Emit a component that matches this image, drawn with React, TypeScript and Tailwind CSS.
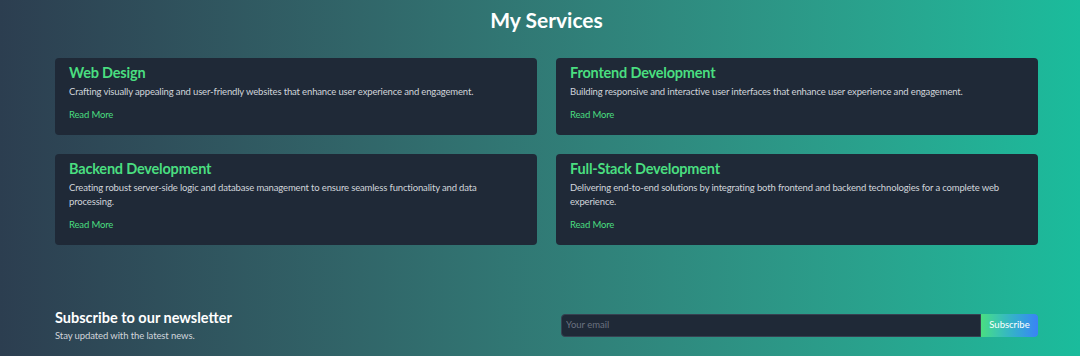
import React from 'react';

const services = [
  {
    title: 'Web Design',
    text: 'Crafting visually appealing and user-friendly websites that enhance user experience and engagement.',
  },
  {
    title: 'Frontend Development',
    text: 'Building responsive and interactive user interfaces that enhance user experience and engagement.',
  },
  {
    title: 'Backend Development',
    text: 'Creating robust server-side logic and database management to ensure seamless functionality and data processing.',
  },
  {
    title: 'Full-Stack Development',
    text: 'Delivering end-to-end solutions by integrating both frontend and backend technologies for a complete web experience.',
  },
];

const ServiceCard = ({ title, text }: { title: string; text: string }) => (
  <div className="bg-[#1f2937] rounded-[4px] pl-[14px] pr-[20px] pt-[4px] pb-[13px]">
    <h3 className="text-[14.5px] leading-[21px] font-bold tracking-[-0.2px] text-[#4ade80]">{title}</h3>
    <p className="mt-[2px] text-[9.5px] leading-[14px] tracking-[-0.15px] text-[#d1d5db]">{text}</p>
    <a href="#" className="block mt-[9px] text-[9.5px] leading-[14px] tracking-[-0.15px] text-[#4ade80]">
      Read More
    </a>
  </div>
);

export default function App() {
  return (
    <div
      className="w-[1080px] h-[356px] overflow-hidden bg-gradient-to-r from-[#2c3e50] to-[#1abc9c] text-white"
      style={{ fontFamily: 'Lato, "Open Sans", sans-serif' }}
    >
      <div className="w-[983px] ml-[55px] flex flex-col">
        <h2 className="pt-[6px] text-center text-[21px] leading-[28px] font-bold">My Services</h2>
        <div className="mt-[24px] grid grid-cols-2 gap-x-[19px] gap-y-[19px] items-start">
          {services.map((s) => (
            <ServiceCard key={s.title} title={s.title} text={s.text} />
          ))}
        </div>
        <div className="mt-[63px] flex items-center justify-between">
          <div>
            <h4 className="text-[14.5px] leading-[20px] font-bold">Subscribe to our newsletter</h4>
            <p className="mt-[1px] text-[9.5px] leading-[14px] tracking-[-0.1px] text-[#d1d5db]">
              Stay updated with the latest news.
            </p>
          </div>
          <form className="flex w-[477px] h-[23px]" onSubmit={(e) => e.preventDefault()}>
            <input
              type="email"
              placeholder="Your email"
              className="flex-1 min-w-0 bg-[#1f2937] border border-[#374151] rounded-l-[4px] px-[4px] text-[9.5px] text-white placeholder:text-[#6b7280] outline-none"
            />
            <button
              type="submit"
              className="w-[57px] rounded-r-[4px] bg-gradient-to-r from-[#4ade80] to-[#3b82f6] text-[9.5px] text-white"
            >
              Subscribe
            </button>
          </form>
        </div>
      </div>
    </div>
  );
}
